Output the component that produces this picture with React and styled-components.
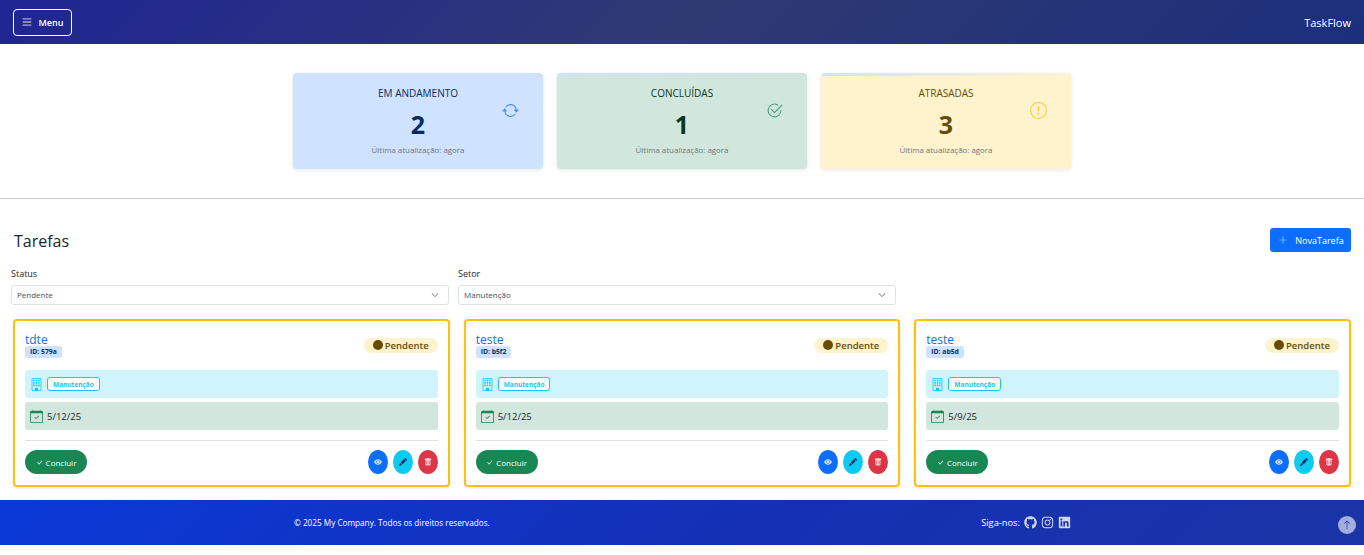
import styled, { createGlobalStyle } from "styled-components";
import {
  BsArrowRepeat,
  BsArrowUp,
  BsBuilding,
  BsCalendarCheck,
  BsCheck2Circle,
  BsCheckLg,
  BsChevronDown,
  BsExclamationCircle,
  BsEyeFill,
  BsPencilFill,
  BsPlusLg,
  BsTrashFill,
} from "react-icons/bs";
import { FaBars, FaGithub, FaInstagram, FaLinkedin } from "react-icons/fa";

const GlobalStyle = createGlobalStyle`
  * { box-sizing: border-box; }
  body {
    margin: 0;
    background: #fff;
    color: #212529;
    font-family: "Open Sans", "Noto Sans", sans-serif;
  }
`;

const TopBar = styled.header`
  height: 44px;
  padding: 0 13px;
  display: flex;
  align-items: center;
  justify-content: space-between;
  background: linear-gradient(135deg, #1f2594 0%, #2f3a72 50%, #1c2f7c 100%);
  color: #fff;
`;

const MenuButton = styled.button`
  width: 59px;
  height: 27px;
  padding: 0;
  display: flex;
  align-items: center;
  justify-content: center;
  gap: 7px;
  border: 1px solid #fff;
  border-radius: 4px;
  background: transparent;
  color: #fff;
  font: 600 9px "Open Sans", sans-serif;
  svg { font-size: 10px; opacity: 0.6; }
`;

const Brand = styled.span`
  font-size: 11px;
  font-weight: 500;
`;

const Stats = styled.section`
  width: 778px;
  margin: 29px auto 0;
  display: flex;
  gap: 14px;
`;

const StatCard = styled.div`
  position: relative;
  width: 250px;
  height: 96px;
  padding-top: 14px;
  border-radius: 4px;
  overflow: hidden;
  text-align: center;
  background: ${(p) => p.$bg};
  color: ${(p) => p.$fg};
  box-shadow: 0 1px 4px rgba(0, 0, 0, 0.1);

  &::before {
    content: "";
    position: absolute;
    left: 0;
    right: 0;
    top: 0;
    height: 3px;
    background: ${(p) => p.$strip || "transparent"};
  }
`;

const StatTitle = styled.div`
  font-size: 10px;
  line-height: 13px;
`;

const StatValue = styled.div`
  margin-top: 8px;
  font-size: 25px;
  line-height: 32px;
  font-weight: 700;
`;

const StatNote = styled.div`
  margin-top: 4px;
  font-size: 7.9px;
  line-height: 12px;
  color: #6c757d;
`;

const StatIcon = styled.span`
  position: absolute;
  right: 24px;
  top: 29px;
  display: flex;
  font-size: 17px;
  color: ${(p) => p.$color};
`;

const Rule = styled.hr`
  margin: 29px 0 0;
  border: 0;
  border-top: 1px solid #c8c9cb;
`;

const TasksHead = styled.div`
  margin-top: 29px;
  padding: 0 13px 0 14px;
  height: 24px;
  display: flex;
  align-items: center;
  justify-content: space-between;
`;

const Heading = styled.h2`
  margin: 0;
  padding-top: 2px;
  font-size: 16px;
  font-weight: 400;
  color: #212529;
`;

const NewButton = styled.button`
  width: 81px;
  height: 24px;
  padding: 0 0 0 1px;
  display: flex;
  align-items: center;
  justify-content: center;
  gap: 7px;
  border: 0;
  border-radius: 3px;
  background: #0d6efd;
  color: #fff;
  font: 400 9px "Open Sans", sans-serif;
  svg { font-size: 10px; opacity: 0.75; }
`;

const Filters = styled.div`
  margin-top: 15px;
  padding: 0 21px 0 11px;
  display: grid;
  grid-template-columns: repeat(3, 438px);
  gap: 9px;
`;

const Field = styled.div`
  display: flex;
  flex-direction: column;
  gap: 5px;
`;

const FieldLabel = styled.label`
  font-size: 9px;
  line-height: 13px;
`;

const SelectBox = styled.div`
  height: 20px;
  padding: 0 9px 1px 5px;
  display: flex;
  align-items: center;
  justify-content: space-between;
  border: 1px solid #dee2e6;
  border-radius: 3px;
  font-size: 8px;
  color: #495057;
  svg { font-size: 8px; color: #343a40; }
`;

const TaskGrid = styled.div`
  margin-top: 14px;
  padding: 0 13px;
  display: grid;
  grid-template-columns: repeat(3, 1fr);
  gap: 14px;
`;

const TaskCard = styled.article`
  height: 168px;
  padding: 10px 10px 0;
  border: 2px solid #ffc107;
  border-radius: 4px;
  box-shadow: 0 1px 3px rgba(0, 0, 0, 0.1);
`;

const TaskTop = styled.div`
  height: 39px;
  display: flex;
  align-items: center;
  justify-content: space-between;
  padding-bottom: 11px;
`;

const TaskTitle = styled.div`
  font-size: 12px;
  line-height: 13px;
  color: #0d6efd;
`;

const IdBadge = styled.span`
  display: block;
  width: fit-content;
  padding: 0 5px;
  border-radius: 3px;
  background: #cfe2ff;
  color: #052c65;
  font-size: 6.8px;
  line-height: 12px;
  font-weight: 700;
`;

const StatusPill = styled.span`
  width: 74px;
  height: 15px;
  display: flex;
  align-items: center;
  justify-content: center;
  gap: 2px;
  border-radius: 8px;
  background: #fff3cd;
  color: #664d03;
  font-size: 9.5px;
  font-weight: 600;
`;

const StatusDot = styled.i`
  width: 10px;
  height: 10px;
  border-radius: 50%;
  background: #664d03;
`;

const InfoRow = styled.div`
  height: 28px;
  margin-bottom: 4px;
  padding: 0 5px;
  display: flex;
  align-items: center;
  gap: 4px;
  border-radius: 3px;
  background: ${(p) => p.$bg};
  font-size: 9.5px;
  svg { font-size: 13px; color: ${(p) => p.$icon}; }
`;

const SectorTag = styled.span`
  height: 14px;
  padding: 0 5px;
  display: flex;
  align-items: center;
  border: 1px solid #0dcaf0;
  border-radius: 3px;
  background: #fff;
  color: #0dcaf0;
  font-size: 6.5px;
  font-weight: 700;
`;

const TaskFoot = styled.div`
  margin-top: 10px;
  padding-top: 9px;
  display: flex;
  align-items: center;
  justify-content: space-between;
  border-top: 1px solid #dee2e6;
`;

const DoneButton = styled.button`
  width: 62px;
  height: 24px;
  padding: 0;
  display: flex;
  align-items: center;
  justify-content: center;
  gap: 3px;
  border: 0;
  border-radius: 12px;
  background: #198754;
  color: #fff;
  font: 400 8px "Open Sans", sans-serif;
  svg { font-size: 7px; }
`;

const Actions = styled.div`
  display: flex;
  gap: 5px;
`;

const RoundButton = styled.button`
  width: 20px;
  height: 24px;
  padding: 0;
  display: flex;
  align-items: center;
  justify-content: center;
  border: 0;
  border-radius: 50%;
  background: ${(p) => p.$bg};
  color: ${(p) => p.$fg};
  font-size: 8px;
`;

const Footer = styled.footer`
  position: relative;
  height: 45px;
  margin-top: 13px;
  background: linear-gradient(135deg, #0a39d8 0%, #1530b4 55%, #1a35a5 100%);
  color: #fff;
`;

const FooterInner = styled.div`
  width: 778px;
  height: 100%;
  margin: 0 auto;
  padding-left: 1px;
  display: flex;
  align-items: center;
  justify-content: space-between;
  font-size: 8.2px;
`;

const Social = styled.div`
  display: flex;
  align-items: center;
  gap: 4px;
  font-size: 9.3px;
  svg { font-size: 13px; opacity: 0.8; }
`;

const ToTop = styled.button`
  position: absolute;
  right: 8px;
  top: 16px;
  width: 18px;
  height: 18px;
  padding: 0;
  display: flex;
  align-items: center;
  justify-content: center;
  border: 0;
  border-radius: 50%;
  background: rgba(255, 255, 255, 0.6);
  color: #1530b4;
  font-size: 10px;
`;

const stats = [
  { title: "EM ANDAMENTO", value: 2, bg: "#cfe2ff", fg: "#052c65", icon: <BsArrowRepeat />, color: "#3d8bfd" },
  { title: "CONCLUÍDAS", value: 1, bg: "#d1e7dd", fg: "#0a3622", icon: <BsCheck2Circle />, color: "#479f76", strip: "linear-gradient(90deg, #cfe2ff, #d1e7dd)" },
  { title: "ATRASADAS", value: 3, bg: "#fff3cd", fg: "#664d03", icon: <BsExclamationCircle />, color: "#ffcd39", strip: "linear-gradient(90deg, #cfe2ff, #fff3cd)" },
];

const tasks = [
  { title: "tdte", id: "579a", date: "5/12/25" },
  { title: "teste", id: "b5f2", date: "5/12/25" },
  { title: "teste", id: "ab5d", date: "5/9/25" },
];

export default function App() {
  return (
    <>
      <GlobalStyle />
      <TopBar>
        <MenuButton>
          <FaBars />
          Menu
        </MenuButton>
        <Brand>TaskFlow</Brand>
      </TopBar>

      <Stats>
        {stats.map((s) => (
          <StatCard key={s.title} $bg={s.bg} $fg={s.fg} $strip={s.strip}>
            <StatTitle>{s.title}</StatTitle>
            <StatValue>{s.value}</StatValue>
            <StatNote>Última atualização: agora</StatNote>
            <StatIcon $color={s.color}>{s.icon}</StatIcon>
          </StatCard>
        ))}
      </Stats>

      <Rule />

      <TasksHead>
        <Heading>Tarefas</Heading>
        <NewButton>
          <BsPlusLg />
          NovaTarefa
        </NewButton>
      </TasksHead>

      <Filters>
        <Field>
          <FieldLabel>Status</FieldLabel>
          <SelectBox>
            Pendente
            <BsChevronDown />
          </SelectBox>
        </Field>
        <Field>
          <FieldLabel>Setor</FieldLabel>
          <SelectBox>
            Manutenção
            <BsChevronDown />
          </SelectBox>
        </Field>
      </Filters>

      <TaskGrid>
        {tasks.map((t) => (
          <TaskCard key={t.id}>
            <TaskTop>
              <div>
                <TaskTitle>{t.title}</TaskTitle>
                <IdBadge>ID: {t.id}</IdBadge>
              </div>
              <StatusPill>
                <StatusDot />
                Pendente
              </StatusPill>
            </TaskTop>
            <InfoRow $bg="#cff4fc" $icon="#0dcaf0">
              <BsBuilding />
              <SectorTag>Manutenção</SectorTag>
            </InfoRow>
            <InfoRow $bg="#d1e7dd" $icon="#198754">
              <BsCalendarCheck />
              {t.date}
            </InfoRow>
            <TaskFoot>
              <DoneButton>
                <BsCheckLg />
                Concluir
              </DoneButton>
              <Actions>
                <RoundButton $bg="#0d6efd" $fg="#cfe2ff"><BsEyeFill /></RoundButton>
                <RoundButton $bg="#0dcaf0" $fg="#052c65"><BsPencilFill /></RoundButton>
                <RoundButton $bg="#dc3545" $fg="#f8d7da"><BsTrashFill /></RoundButton>
              </Actions>
            </TaskFoot>
          </TaskCard>
        ))}
      </TaskGrid>

      <Footer>
        <FooterInner>
          <span>© 2025 My Company. Todos os direitos reservados.</span>
          <Social>
            <span>Siga-nos:</span>
            <FaGithub />
            <FaInstagram />
            <FaLinkedin />
          </Social>
        </FooterInner>
        <ToTop>
          <BsArrowUp />
        </ToTop>
      </Footer>
    </>
  );
}
